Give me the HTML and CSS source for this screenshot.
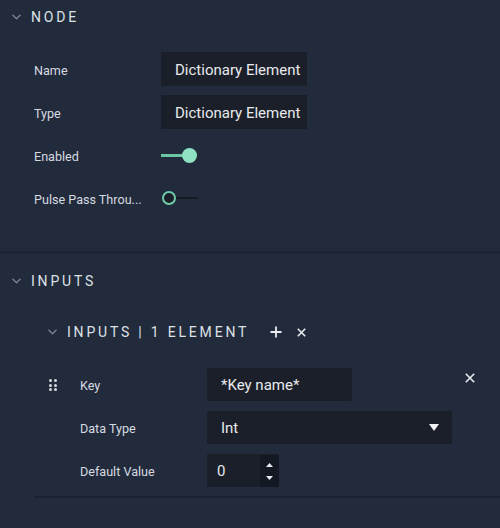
FILE: index.html
```html
<!DOCTYPE html>
<html>
<head>
<meta charset="utf-8">
<link rel="stylesheet" href="styles.css">
</head>
<body>
<section class="group node">
  <div class="group-head">
    <svg class="chev" width="9" height="6" viewBox="0 0 9 6"><polyline points="0.5,0.8 4.5,4.8 8.5,0.8" fill="none" stroke="#7c8493" stroke-width="1.3"/></svg>
    <span class="title">NODE</span>
  </div>
  <div class="rows">
    <div class="row"><span class="label">Name</span><div class="field text">Dictionary Element</div></div>
    <div class="row"><span class="label">Type</span><div class="field text">Dictionary Element</div></div>
    <div class="row"><span class="label">Enabled</span><div class="toggle on"><span class="track"></span><span class="knob"></span></div></div>
    <div class="row"><span class="label">Pulse Pass Throu...</span><div class="toggle off"><span class="knob"></span><span class="track"></span></div></div>
  </div>
</section>
<section class="group inputs">
  <div class="group-head">
    <svg class="chev" width="9" height="6" viewBox="0 0 9 6"><polyline points="0.5,0.8 4.5,4.8 8.5,0.8" fill="none" stroke="#7c8493" stroke-width="1.3"/></svg>
    <span class="title">INPUTS</span>
  </div>
  <div class="sub-head">
    <svg class="chev" width="9" height="6" viewBox="0 0 9 6"><polyline points="0.5,0.8 4.5,4.8 8.5,0.8" fill="none" stroke="#7c8493" stroke-width="1.3"/></svg>
    <span class="title">INPUTS | 1 ELEMENT</span>
    <svg class="plus" width="12" height="12" viewBox="0 0 12 12"><path d="M6 0.5V11.5M0.5 6H11.5" stroke="#e8ebef" stroke-width="1.8"/></svg>
    <svg class="close" width="9" height="9" viewBox="0 0 9 9"><path d="M0.8 0.8L8.2 8.2M8.2 0.8L0.8 8.2" stroke="#e8ebef" stroke-width="1.6"/></svg>
  </div>
  <div class="element">
    <div class="el-rows">
      <div class="row">
        <span class="handle"><i></i><i></i><i></i><i></i><i></i><i></i></span>
        <span class="label">Key</span><div class="field text key">*Key name*</div>
      </div>
      <div class="row">
        <span class="handle blank"></span>
        <span class="label">Data Type</span>
        <div class="field select"><span>Int</span><svg width="10" height="7" viewBox="0 0 10 7"><path d="M0 0H10L5 7Z" fill="#f2f3f5"/></svg></div>
      </div>
      <div class="row">
        <span class="handle blank"></span>
        <span class="label">Default Value</span>
        <div class="field number"><span class="num">0</span><span class="spin"><svg width="7" height="4" viewBox="0 0 7 4"><path d="M0 4H7L3.5 0Z" fill="#e8ebef"/></svg><svg width="7" height="4" viewBox="0 0 7 4"><path d="M0 0H7L3.5 4Z" fill="#e8ebef"/></svg></span></div>
      </div>
    </div>
    <svg class="close el-close" width="10" height="10" viewBox="0 0 10 10"><path d="M0.8 0.8L9.2 9.2M9.2 0.8L0.8 9.2" stroke="#e8ebef" stroke-width="1.6"/></svg>
  </div>
</section>
</body>
</html>
```
FILE: styles.css
```css
html, body {
  margin: 0;
  padding: 0;
  background: #222b3b;
  width: 500px;
  height: 528px;
  overflow: hidden;
  font-family: Roboto, "Liberation Sans", sans-serif;
  color: #d9dde3;
}

.group-head {
  display: flex;
  align-items: center;
  height: 34px;
  padding-left: 12px;
}

.chev {
  display: block;
  margin-right: 10px;
}

.title {
  font-size: 14px;
  letter-spacing: 2.8px;
  color: #dde1e6;
  font-weight: 400;
}

.node {
  padding-bottom: 36px;
  border-bottom: 2px solid #1b2230;
  box-shadow: 0 1px 0 #1f2735;
}

.rows {
  display: flex;
  flex-direction: column;
  gap: 9px;
  margin-top: 18px;
  padding-left: 34px;
}

.row {
  display: flex;
  align-items: center;
  height: 34px;
}

.label {
  width: 127px;
  font-size: 12.6px;
  color: #d6dae0;
  white-space: nowrap;
  overflow: hidden;
  padding-top: 2px;
}

.field {
  background: #1a1f29;
  height: 100%;
  display: flex;
  align-items: center;
  box-sizing: border-box;
  font-size: 15px;
  color: #e8eaed;
  border-radius: 1px;
  padding-top: 1px;
}

.text {
  width: 146px;
  padding-left: 14px;
}

.toggle {
  display: flex;
  align-items: center;
  width: 37px;
  height: 16px;
}

.toggle.on .track {
  width: 23px;
  height: 3px;
  background: #6cc6a4;
}

.toggle.on .knob {
  width: 15px;
  height: 15px;
  border-radius: 50%;
  background: #8fe2c2;
  margin-left: -2px;
}

.toggle.off .knob {
  width: 10px;
  height: 10px;
  border-radius: 50%;
  border: 2px solid #6fcaa8;
  background: #1a1f29;
  margin-left: 1px;
}

.toggle.off .track {
  width: 22px;
  height: 2px;
  background: #161b24;
}

.inputs {
  padding-top: 11px;
}

.sub-head {
  display: flex;
  align-items: center;
  height: 34px;
  margin-top: 17px;
  padding-left: 48px;
}

.plus {
  margin-left: 21px;
  display: block;
}

.close {
  display: block;
}

.sub-head .close {
  margin-left: 15px;
}

.element {
  margin-top: 19px;
  margin-left: 34px;
  display: flex;
  align-items: flex-start;
  border-bottom: 2px solid #1b2230;
  padding-bottom: 9px;
}

.el-rows {
  display: flex;
  flex-direction: column;
  gap: 10px;
}

.el-rows .row {
  height: 33px;
}

.handle {
  width: 46px;
  box-sizing: border-box;
  padding-left: 15px;
  display: grid;
  grid-template-columns: 3px 3px;
  grid-auto-rows: 3px;
  column-gap: 2px;
  row-gap: 1.5px;
  align-self: center;
  padding-top: 1px;
}

.handle i {
  display: block;
  width: 3px;
  height: 3px;
  border-radius: 1.5px;
  background: #d6dae0;
}

.handle.blank {
  height: 2px;
}

.key {
  width: 145px;
}

.select {
  width: 245px;
  padding: 0 13px 0 14px;
  justify-content: space-between;
}

.number {
  width: 72px;
  padding-left: 10px;
  justify-content: space-between;
}

.spin {
  width: 19px;
  height: 100%;
  background: #131822;
  display: flex;
  flex-direction: column;
  align-items: center;
  justify-content: center;
  gap: 9px;
}

.spin svg {
  display: block;
}

.el-close {
  margin-left: 13px;
  margin-top: 5px;
}
```
